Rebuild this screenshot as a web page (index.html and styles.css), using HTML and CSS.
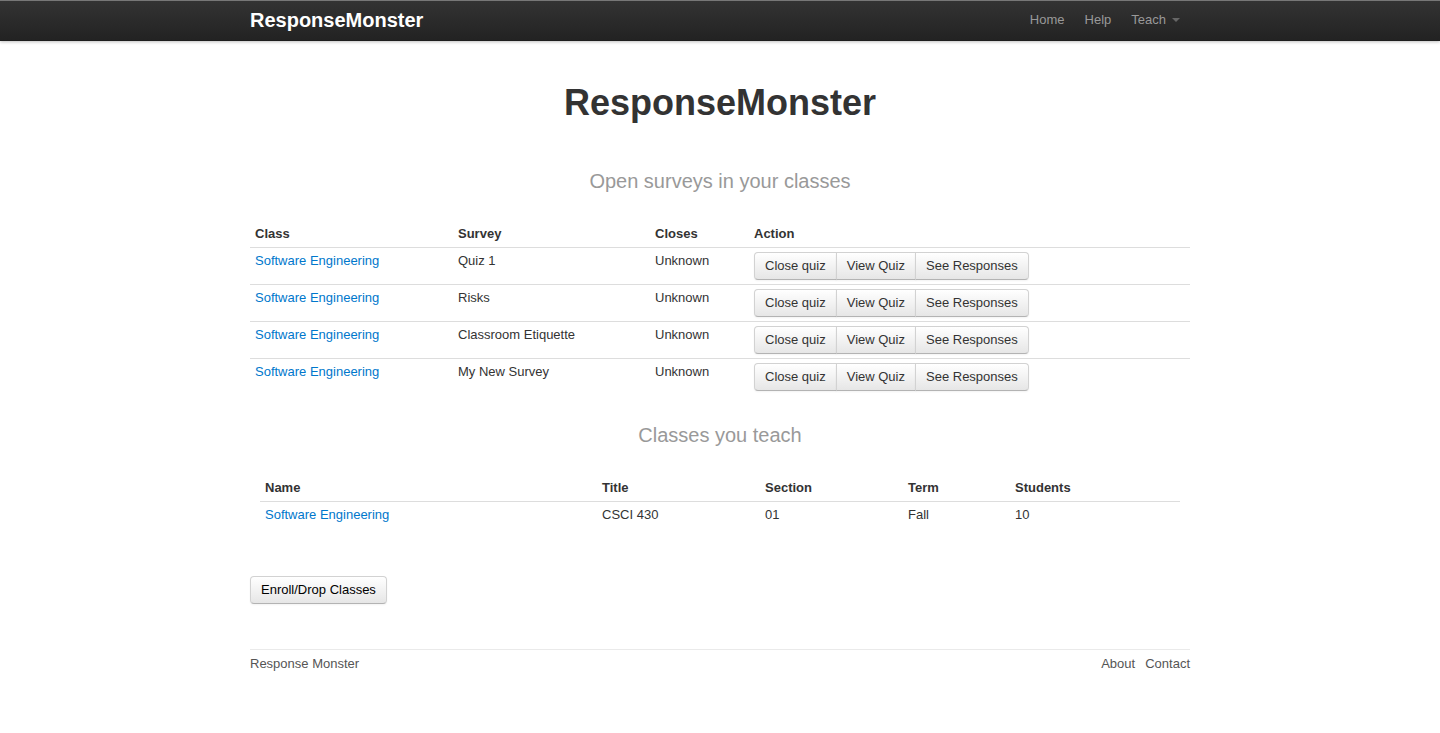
FILE: index.html
```html
<!DOCTYPE html>
<html lang="en">
<head>
<meta charset="utf-8">
<title>ResponseMonster</title>
<link rel="stylesheet" href="styles.css">
</head>
<body>
<header class="navbar">
  <div class="container navbar-inner">
    <a class="brand" href="#">ResponseMonster</a>
    <nav class="nav">
      <a href="#">Home</a>
      <a href="#">Help</a>
      <a href="#">Teach <span class="caret"></span></a>
    </nav>
  </div>
</header>
<main class="container">
  <h1 class="title">ResponseMonster</h1>
  <h2 class="subtitle">Open surveys in your classes</h2>
  <table class="table surveys">
    <thead>
      <tr><th class="col-class">Class</th><th class="col-survey">Survey</th><th class="col-closes">Closes</th><th>Action</th></tr>
    </thead>
    <tbody>
      <tr><td><a href="#">Software Engineering</a></td><td>Quiz 1</td><td>Unknown</td>
        <td><div class="btn-group"><button class="btn" type="button">Close quiz</button><button class="btn" type="button">View Quiz</button><button class="btn" type="button">See Responses</button></div></td></tr>
      <tr><td><a href="#">Software Engineering</a></td><td>Risks</td><td>Unknown</td>
        <td><div class="btn-group"><button class="btn" type="button">Close quiz</button><button class="btn" type="button">View Quiz</button><button class="btn" type="button">See Responses</button></div></td></tr>
      <tr><td><a href="#">Software Engineering</a></td><td>Classroom Etiquette</td><td>Unknown</td>
        <td><div class="btn-group"><button class="btn" type="button">Close quiz</button><button class="btn" type="button">View Quiz</button><button class="btn" type="button">See Responses</button></div></td></tr>
      <tr><td><a href="#">Software Engineering</a></td><td>My New Survey</td><td>Unknown</td>
        <td><div class="btn-group"><button class="btn" type="button">Close quiz</button><button class="btn" type="button">View Quiz</button><button class="btn" type="button">See Responses</button></div></td></tr>
    </tbody>
  </table>
  <h2 class="subtitle">Classes you teach</h2>
  <div class="inset">
    <table class="table">
      <thead>
        <tr><th class="col-name">Name</th><th class="col-title">Title</th><th class="col-section">Section</th><th class="col-term">Term</th><th>Students</th></tr>
      </thead>
      <tbody>
        <tr><td><a href="#">Software Engineering</a></td><td>CSCI 430</td><td>01</td><td>Fall</td><td>10</td></tr>
      </tbody>
    </table>
  </div>
  <button class="btn btn-enroll" type="button">Enroll/Drop Classes</button>
  <footer class="footer">
    <a href="#">Response Monster</a>
    <nav class="footer-nav">
      <a href="#">About</a>
      <a href="#">Contact</a>
    </nav>
  </footer>
</main>
</body>
</html>
```

FILE: styles.css
```css
* {
  box-sizing: border-box;
}

body {
  margin: 0;
  background: #fff;
  color: #333;
  font: 13px/18px "Liberation Sans", Arial, sans-serif;
}

a {
  color: #0077cc;
  text-decoration: none;
}

.container {
  width: 100%;
  max-width: 940px;
  margin: 0 auto;
}

.navbar {
  border-top: 1px solid #777;
  background: linear-gradient(#333, #222);
  box-shadow: 0 1px 3px rgba(0, 0, 0, 0.25), inset 0 -1px 0 rgba(0, 0, 0, 0.1);
}

.navbar-inner {
  display: flex;
  justify-content: space-between;
  align-items: center;
  padding: 9px 0 11px;
}

.brand {
  color: #fff;
  font-size: 20px;
  font-weight: bold;
  line-height: 20px;
}

.nav {
  display: flex;
}

.nav a {
  display: flex;
  align-items: center;
  gap: 6px;
  padding: 0 10px;
  color: #999;
}

.caret {
  border: 4px solid transparent;
  border-top-color: #666;
  border-bottom: 0;
}

.title {
  margin: 42px 0 40px;
  color: #333;
  font-size: 36px;
  line-height: 40px;
  text-align: center;
}

.subtitle {
  margin: 0 0 22px;
  color: #999;
  font-size: 20px;
  font-weight: normal;
  line-height: 36px;
  text-align: center;
}

.surveys {
  margin-bottom: 22px;
}

.inset {
  padding: 0 10px;
}

.table {
  width: 100%;
  border-collapse: collapse;
  table-layout: fixed;
}

.table th,
.table td {
  padding: 4px 5px;
  text-align: left;
  vertical-align: top;
}

.table td {
  border-top: 1px solid #ddd;
}

.col-class {
  width: 203px;
}

.col-survey {
  width: 197px;
}

.col-closes {
  width: 99px;
}

.col-name {
  width: 337px;
}

.col-title {
  width: 163px;
}

.col-section {
  width: 143px;
}

.col-term {
  width: 107px;
}

.btn {
  padding: 4px 10px;
  border: 1px solid #d2d2d2;
  border-bottom-color: #b3b3b3;
  border-radius: 4px;
  background: linear-gradient(#fff, #e6e6e6);
  box-shadow: inset 0 1px 0 rgba(255, 255, 255, 0.2), 0 1px 2px rgba(0, 0, 0, 0.05);
  color: #333;
  font: inherit;
}

.btn-group {
  display: flex;
}

.btn-group .btn {
  border-radius: 0;
}

.btn-group .btn + .btn {
  margin-left: -1px;
}

.btn-group .btn:first-child {
  border-radius: 4px 0 0 4px;
}

.btn-group .btn:last-child {
  border-radius: 0 4px 4px 0;
}

.btn-enroll {
  margin-top: 48px;
  color: #000;
}

.footer {
  display: flex;
  justify-content: space-between;
  margin-top: 45px;
  padding-top: 5px;
  border-top: 1px solid #eaeaea;
}

.footer a {
  color: #555;
}

.footer-nav {
  display: flex;
  gap: 10px;
}
```
